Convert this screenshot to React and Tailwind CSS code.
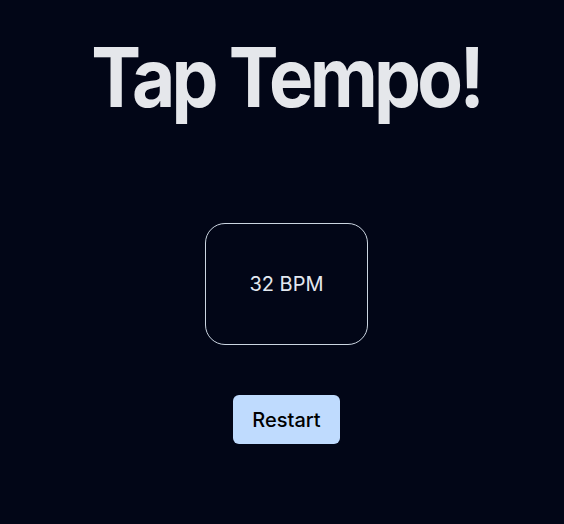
export default function App() {
  return (
    <div className="min-h-screen bg-[#020617] flex flex-col items-center pl-[9px]" style={{ fontFamily: "Inter, sans-serif" }}>
      <h1 className="mt-[30px] text-[82px] leading-[96px] font-bold tracking-[-0.05em] scale-x-[0.91] text-[#e5e7eb] whitespace-nowrap">Tap Tempo!</h1>
      <div className="mt-[97px] w-[163px] h-[122px] rounded-[20px] border border-[#cbd5e1] flex items-center justify-center text-[20px] text-[#e2e8f0]">
        32 BPM
      </div>
      <button className="mt-[50px] w-[107px] h-[49px] rounded-[6px] bg-[#bfdbfe] text-black text-[20px] font-medium">
        Restart
      </button>
    </div>
  );
}
